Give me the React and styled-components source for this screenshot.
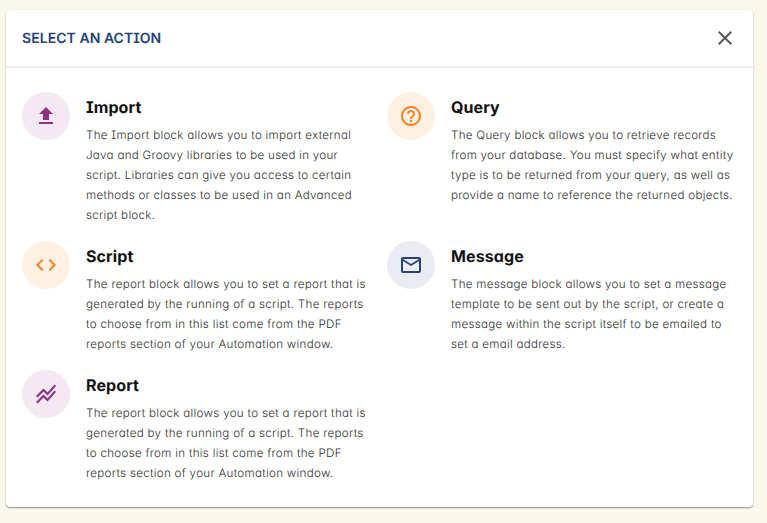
import React from 'react';
import styled, { createGlobalStyle } from 'styled-components';

const GlobalStyle = createGlobalStyle`
  * { box-sizing: border-box; }
  body {
    margin: 0;
    background: #faf7eb;
    font-family: Inter, "Liberation Sans", sans-serif;
    font-feature-settings: "cv08" 1, "cv11" 1;
    text-rendering: geometricPrecision;
    -webkit-font-smoothing: antialiased;
  }
`;

const Page = styled.div`
  height: 523px;
  padding: 10px 14.5px 16px 6px;
  overflow: hidden;
`;

const Card = styled.section`
  height: 497px;
  background: #fff;
  border-radius: 4px;
  box-shadow: 0 1px 1px rgba(0, 0, 0, 0.32), 0 1px 3px rgba(0, 0, 0, 0.14);
`;

const Header = styled.header`
  display: flex;
  align-items: center;
  justify-content: space-between;
  height: 58px;
  padding: 0 16px;
  border-bottom: 2px solid #ebebeb;
`;

const Title = styled.h1`
  margin: 1px 0 0;
  font-size: 14px;
  font-weight: 600;
  line-height: 20px;
  letter-spacing: 0.05px;
  color: #24437a;
`;

const CloseButton = styled.button`
  display: flex;
  padding: 0;
  border: 0;
  background: none;
  color: #58595b;
`;

const Grid = styled.div`
  display: grid;
  grid-template-columns: 365px 365px;
  padding: 23.6px 0 0 16px;
`;

const Action = styled.article`
  display: flex;
  align-items: flex-start;
  gap: 16px;
  padding-bottom: 14.8px;
`;

const Badge = styled.div`
  display: flex;
  flex: none;
  align-items: center;
  justify-content: center;
  width: 48px;
  height: 48px;
  border-radius: 50%;
  background: ${(p) => p.$background};
  color: ${(p) => p.$color};
`;

const Name = styled.h2`
  margin: 3.4px 0 6.2px;
  font-size: 16px;
  font-weight: 700;
  line-height: 25px;
  letter-spacing: 0.1px;
  color: #111;
`;

const Description = styled.p`
  margin: 0;
  font-size: 11.6px;
  font-weight: 300;
  line-height: 19.92px;
  letter-spacing: ${(p) => p.$tracking ?? 0.28}px;
  white-space: pre;
  color: #303030;
`;

const Icon = ({ d, size = 24 }) => (
  <svg width={size} height={size} viewBox="0 0 24 24" fill="currentColor" aria-hidden="true">
    <path d={d} />
  </svg>
);

const icons = {
  close: 'M19 6.41 17.59 5 12 10.59 6.41 5 5 6.41 10.59 12 5 17.59 6.41 19 12 13.41 17.59 19 19 17.59 13.41 12z',
  upload: 'M9 16h6v-6h4l-7-7-7 7h4zm-4 2h14v2H5z',
  help: 'M11 18h2v-2h-2v2zm1-16C6.48 2 2 6.48 2 12s4.48 10 10 10 10-4.48 10-10S17.52 2 12 2zm0 18c-4.41 0-8-3.59-8-8s3.59-8 8-8 8 3.59 8 8-3.59 8-8 8zm0-14c-2.21 0-4 1.79-4 4h2c0-1.1.9-2 2-2s2 .9 2 2c0 2-3 1.75-3 5h2c0-2.25 3-2.5 3-5 0-2.21-1.79-4-4-4z',
  code: 'M9.4 16.6 4.8 12l4.6-4.6L8 6l-6 6 6 6 1.4-1.4zm5.2 0 4.6-4.6-4.6-4.6L16 6l6 6-6 6-1.4-1.4z',
  mail: 'M22 6c0-1.1-.9-2-2-2H4c-1.1 0-2 .9-2 2v12c0 1.1.9 2 2 2h16c1.1 0 2-.9 2-2V6zm-2 0-8 5-8-5h16zm0 12H4V8l8 5 8-5v10z',
  chart: 'M2 19.99l7.5-7.51 4 4 7.09-7.97L22 9.92l-8.5 9.56-4-4-6 6.01-1.5-1.5zm1.5-4.5l6-6.01 4 4L22 3.92l-1.41-1.41-7.09 7.97-4-4L2 13.99l1.5 1.5z',
};

const tones = {
  purple: { background: '#f4e8f2', color: '#8c3181' },
  orange: { background: '#fff0e3', color: '#fb811e' },
  blue: { background: '#eaecf2', color: '#24437a' },
};

const reportText = `The report block allows you to set a report that is
generated by the running of a script. The reports
to choose from in this list come from the PDF
reports section of your Automation window.`;

const actions = [
  {
    name: 'Import', icon: 'upload', tone: 'purple',
    text: `The Import block allows you to import external
Java and Groovy libraries to be used in your
script. Libraries can give you access to certain
methods or classes to be used in an Advanced
script block.`,
  },
  {
    name: 'Query', icon: 'help', tone: 'orange',
    text: `The Query block allows you to retrieve records
from your database. You must specify what entity
type is to be returned from your query, as well as
provide a name to reference the returned objects.`,
  },
  { name: 'Script', icon: 'code', tone: 'orange', text: reportText, tracking: 0.3 },
  {
    name: 'Message', icon: 'mail', tone: 'blue',
    text: `The message block allows you to set a message
template to be sent out by the script, or create a
message within the script itself to be emailed to
set a email address.`,
  },
  { name: 'Report', icon: 'chart', tone: 'purple', text: reportText, tracking: 0.3 },
];

export default function App() {
  return (
    <Page>
      <GlobalStyle />
      <Card>
        <Header>
          <Title>SELECT AN ACTION</Title>
          <CloseButton aria-label="Close"><Icon d={icons.close} /></CloseButton>
        </Header>
        <Grid>
          {actions.map(({ name, icon, tone, text, tracking }) => (
            <Action key={name}>
              <Badge $background={tones[tone].background} $color={tones[tone].color}>
                <Icon d={icons[icon]} />
              </Badge>
              <div>
                <Name>{name}</Name>
                <Description $tracking={tracking}>{text}</Description>
              </div>
            </Action>
          ))}
        </Grid>
      </Card>
    </Page>
  );
}
